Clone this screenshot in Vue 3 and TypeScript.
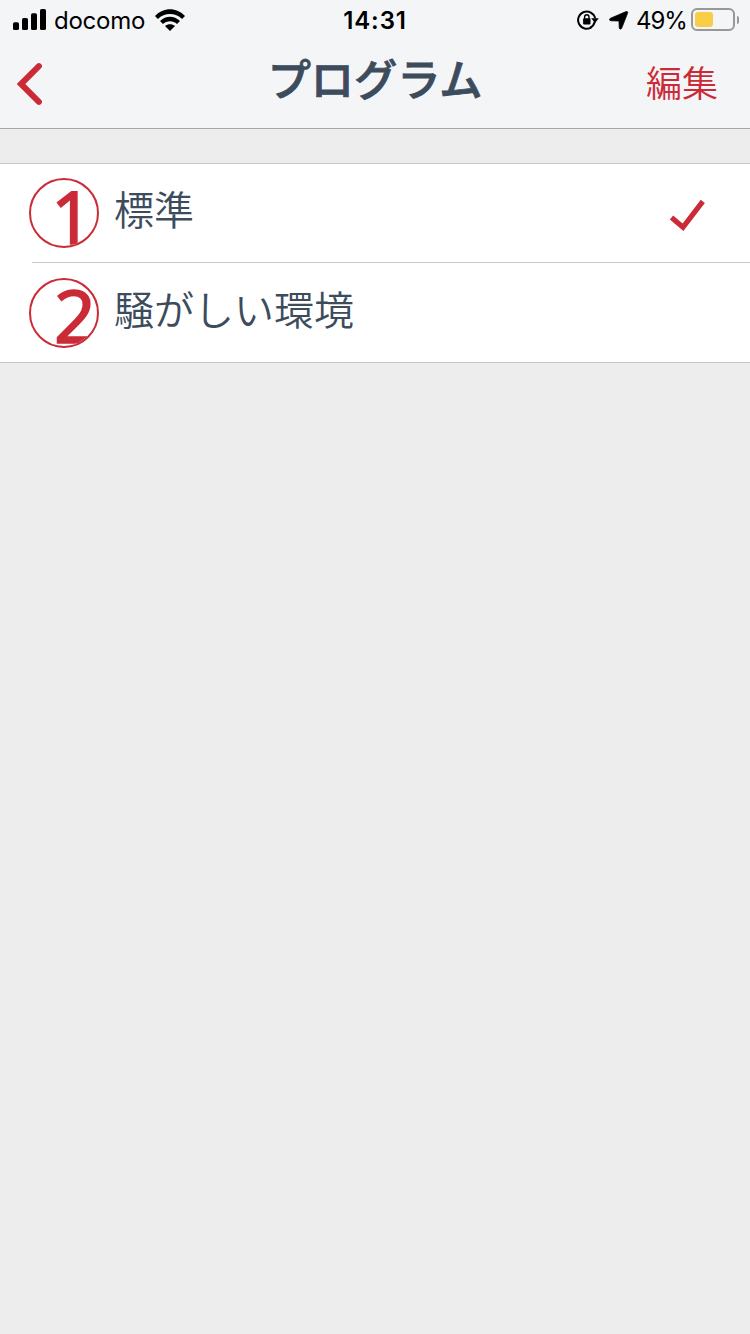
<script setup lang="ts">
import { ref } from 'vue'

interface Program {
  id: number
  name: string
}

const programs: Program[] = [
  { id: 1, name: '標準' },
  { id: 2, name: '騒がしい環境' },
]
const selected = ref<number>(1)
const battery = ref<number>(49)
</script>

<template>
  <div class="screen">
    <header class="top">
      <div class="status">
        <div class="side">
          <svg class="signal" width="34" height="22" viewBox="0 0 34 22">
            <rect x="0" y="13.2" width="6" height="7.8" rx="1.6" />
            <rect x="9" y="9" width="6" height="12" rx="1.6" />
            <rect x="18" y="4.2" width="6" height="16.8" rx="1.6" />
            <rect x="27" y="0" width="6" height="21" rx="1.6" />
          </svg>
          <span class="carrier">docomo</span>
          <svg class="wifi" width="30" height="22" viewBox="0 0 30 22">
            <path d="M0 7.1C8.3-1.9 21.7-1.9 30 7.1L27.1 10C20.5 3.4 9.5 3.4 2.9 10Z" />
            <path d="M5 12.1C10.8 6.3 19.2 6.3 25 12.1L22 15.1C18.1 11.3 11.9 11.3 8 15.1Z" />
            <path d="M10 17.1C12.8 14.5 17.2 14.5 20 17.1L15 22Z" />
          </svg>
        </div>
        <span class="clock">14:31</span>
        <div class="side right">
          <svg class="lock" width="22" height="20" viewBox="0 0 22 20">
            <path d="M14.6 17.2A8.6 8.6 0 1 1 18.1 8.2" fill="none" stroke="#000" stroke-width="2" />
            <path d="M14.2 8.3H21.8L18 13Z" />
            <path d="M17.7 12A8.6 8.6 0 0 1 12.9 17.8" fill="none" stroke="#000" stroke-width="2" />
            <rect x="6.1" y="8.2" width="7.4" height="6.2" rx="1" />
            <path d="M7.6 9V7a2.2 2.2 0 0 1 4.4 0V9" fill="none" stroke="#000" stroke-width="1.4" />
          </svg>
          <svg class="arrow" width="20" height="19" viewBox="0 0 20 19">
            <path d="M17 .6C18.3 .1 19.1 .9 18.6 2.2L12.8 17C12.1 18.7 10.3 18.4 10.2 16.7L10 10.8Q10 10 9.2 10L2 9.8C.2 9.6 0 7.9 1.5 7.2Z" stroke="#000" stroke-width=".7" />
          </svg>
          <span class="percent">{{ battery }}%</span>
          <div class="battery"><div class="fill" :style="{ width: battery * 0.37 + 'px' }"></div></div>
          <div class="cap"></div>
        </div>
      </div>
      <nav class="nav">
        <svg class="back" width="30" height="46" viewBox="0 0 30 46">
          <path d="M23.9 5.2L6 23L23.9 40.8" fill="none" stroke="#cb2b36" stroke-width="6" stroke-linecap="round" stroke-linejoin="miter" />
        </svg>
        <h1 class="title">プログラム</h1>
        <span class="edit">編集</span>
      </nav>
    </header>
    <main class="list">
      <div v-for="p in programs" :key="p.id" class="row" @click="selected = p.id">
        <div class="badge"><span class="digit">{{ p.id }}</span></div>
        <div class="body">
          <span class="name">{{ p.name }}</span>
          <svg v-if="selected === p.id" class="check" width="38" height="34" viewBox="0 0 38 34">
            <path d="M2.5 18.5L14 28.3L33.8 2.3" fill="none" stroke="#cb2b36" stroke-width="5.2" />
          </svg>
        </div>
      </div>
    </main>
  </div>
</template>

<style>
body {
  margin: 0;
  background: #ededed;
}
</style>

<style scoped>
.screen {
  width: 750px;
  height: 1334px;
  overflow: hidden;
  background: #ededed;
  font-family: Inter, 'Noto Sans CJK JP', sans-serif;
}
.top {
  box-sizing: border-box;
  height: 129px;
  background: #f4f5f7;
  border-bottom: 1px solid #a7a7aa;
}
.status {
  display: grid;
  grid-template-columns: 1fr 64px 1fr;
  height: 40px;
  color: #000;
}
.side {
  display: flex;
  align-items: flex-start;
  padding-left: 13px;
}
.right {
  justify-content: flex-end;
  padding: 0 15px 0 0;
}
.signal {
  margin-top: 9px;
}
.carrier {
  margin: 6px 0 0 7px;
  width: 92px;
  font-size: 24px;
  line-height: 30px;
  letter-spacing: -0.25px;
}
.wifi {
  margin: 9px 0 0 9px;
}
.clock {
  padding-top: 6px;
  text-align: center;
  font-size: 24px;
  line-height: 30px;
  font-weight: 600;
  letter-spacing: 0.9px;
  white-space: nowrap;
}
.lock {
  margin: 10px 10px 0 0;
}
.arrow {
  margin: 11px 7px 0 0;
}
.percent {
  width: 52px;
  margin: 6px 3px 0 0;
  font-size: 24px;
  line-height: 30px;
  letter-spacing: -1.1px;
  white-space: nowrap;
}
.battery {
  box-sizing: border-box;
  width: 44px;
  height: 23px;
  margin-top: 8px;
  padding: 2px;
  border: 2px solid #98989b;
  border-radius: 6px;
}
.fill {
  height: 15px;
  border-radius: 3px;
  background: #f8ce46;
}
.cap {
  width: 2px;
  height: 8px;
  margin: 16px -4px 0 2px;
  border-radius: 0 3px 3px 0;
  background: #98989b;
}
.nav {
  display: grid;
  grid-template-columns: 150px 1fr 150px;
  height: 88px;
}
.back {
  margin: 21px 0 0 15px;
}
.title {
  margin: 4px 0 0;
  text-align: center;
  font-size: 43.2px;
  line-height: 72px;
  font-weight: 500;
  color: #3c4c5d;
  -webkit-text-stroke: 0.9px #3c4c5d;
}
.edit {
  margin: 8px 32px 0 0;
  text-align: right;
  font-size: 36px;
  line-height: 72px;
  font-weight: 350;
  color: #cb2b36;
}
.list {
  margin-top: 34px;
  background: #fff;
  border-top: 1px solid #c8c7cc;
  border-bottom: 1px solid #c8c7cc;
}
.row {
  display: grid;
  grid-template-columns: 82px 1fr;
  height: 98px;
  padding-left: 32px;
}
.row + .row {
  background: linear-gradient(#c8c7cc, #c8c7cc) 32px 0 / 718px 1px no-repeat;
}
.row:last-child {
  height: 100px;
}
.badge {
  box-sizing: border-box;
  width: 70px;
  height: 70px;
  margin: 14px 0 0 -3px;
  border: 2px solid #cb2b36;
  border-radius: 50%;
  overflow: hidden;
}
.row + .row .badge {
  margin-top: 16px;
}
.digit {
  display: block;
  margin: -5px 0 0 23px;
  font-family: 'Noto Sans', sans-serif;
  font-size: 73px;
  line-height: 80px;
  color: #cb2b36;
  -webkit-text-stroke: 1.5px #cb2b36;
}
.row:first-child .digit {
  margin: -4px 0 0 20px;
}
.body {
  display: flex;
  justify-content: space-between;
}
.name {
  font-size: 40px;
  line-height: 94px;
  font-weight: 350;
  color: #3c4c5d;
}
.row + .row .name {
  line-height: 97px;
}
.check {
  margin: 35px 43px 0 0;
}
</style>
